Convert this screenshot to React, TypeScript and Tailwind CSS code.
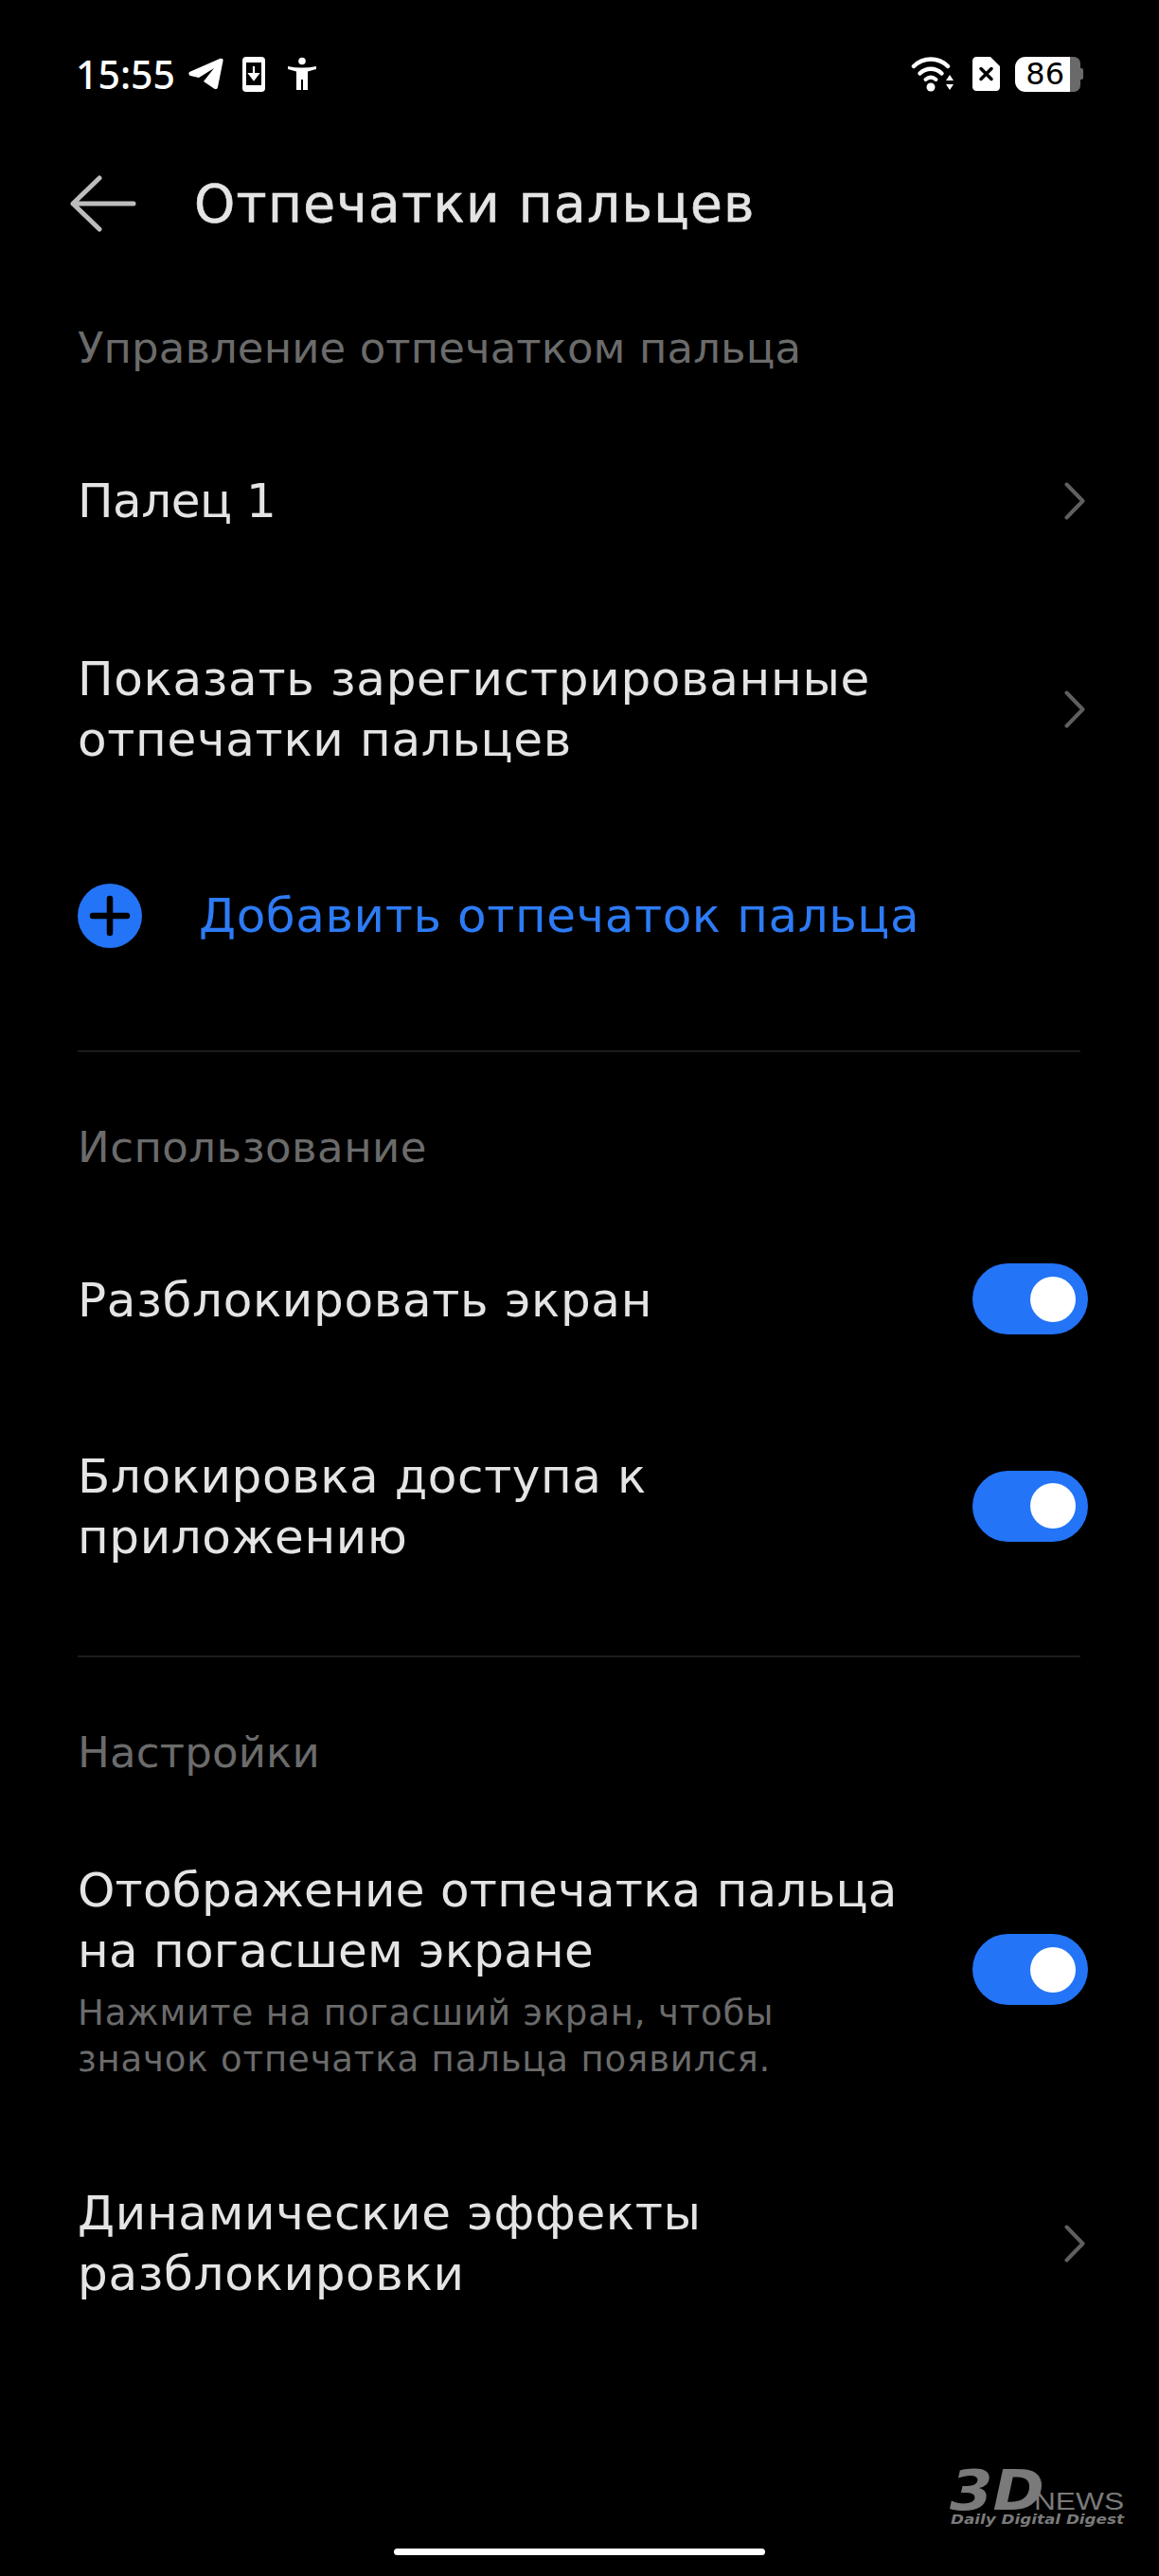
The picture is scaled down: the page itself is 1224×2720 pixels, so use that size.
function Chevron() {
  return (
    <svg width="22" height="40" viewBox="0 0 22 40" fill="none" className="mr-[3px] shrink-0">
      <path d="M2.500 2.500 L19.500 20 L2.500 37.500" stroke="#5f5f5f" strokeWidth="4" strokeLinecap="round" strokeLinejoin="round" />
    </svg>
  );
}

function Toggle() {
  return (
    <div className="flex h-[75px] w-[122px] shrink-0 items-center justify-end rounded-full bg-[#2374f6] pr-[13px]">
      <div className="h-[48px] w-[48px] rounded-full bg-white" />
    </div>
  );
}

function SectionLabel({ children, className }: { children: string; className: string }) {
  return <p className={`text-[45px] leading-[60px] text-[#6b6b6b] ${className}`}>{children}</p>;
}

function Row({ lines, right, className, textClass = "tracking-[0.7px]" }: { lines: string[]; right: React.ReactNode; className: string; textClass?: string }) {
  return (
    <div className={`flex items-center justify-between ${className}`}>
      <div className={`text-[50px] leading-[64px] text-[#e4e4e4] ${textClass}`}>
        {lines.map((line) => (
          <p key={line}>{line}</p>
        ))}
      </div>
      {right}
    </div>
  );
}

function StatusBar() {
  return (
    <div className="flex h-[58px] items-center justify-between pl-[80px] pr-[80px] text-white">
      <div className="flex items-center">
        <span className="font-['Noto_Sans',sans-serif] text-[41px] font-medium leading-none">15:55</span>
        <svg width="38" height="34" viewBox="0 0 38 34" className="ml-[13px]">
          <path d="M2 15 L34 1 C37 0 38 1.500 37.500 3.500 L32 31 C31.500 33.500 29 33.500 28 32.500 L17 25 L28 11 L12 21 L3 19 C1 18.500 1 16 2 15 Z" fill="white" />
        </svg>
        <svg width="24" height="37" viewBox="0 0 24 37" className="ml-[20px]">
          <rect width="24" height="37" rx="4" fill="white" />
          <rect x="4" y="6" width="16" height="24" fill="black" />
          <path d="M12 10 V19 M7.500 18 H16.500 L12 24 Z" stroke="white" strokeWidth="2.200" fill="white" />
        </svg>
        <svg width="32" height="36" viewBox="0 0 32 36" className="ml-[23px]">
          <circle cx="16" cy="4.500" r="3.800" fill="white" />
          <path d="M1 10 Q16 13 31 10 V13 L22 15.500 V35 H17 V24 H15 V35 H10 V15.500 L1 13 Z" fill="white" />
        </svg>
      </div>
      <div className="flex items-center">
        <svg width="46" height="38" viewBox="0 0 46 38" fill="none">
          <path d="M3 11 C13 1 29 1 39 11" stroke="white" strokeWidth="4.500" strokeLinecap="round" />
          <path d="M9.500 18.500 C16 12 26 12 32.500 18.500" stroke="white" strokeWidth="4.500" strokeLinecap="round" />
          <path d="M15.500 25 C19 22 23 22 26.500 25" stroke="white" strokeWidth="4" strokeLinecap="round" />
          <circle cx="21" cy="33" r="4.500" fill="white" />
          <path d="M41 20 L45 26 H37 Z M37 30 H45 L41 36 Z" fill="white" />
        </svg>
        <svg width="29" height="36" viewBox="0 0 29 36" className="ml-[19px]">
          <path d="M4 0 H19 L29 10 V32 C29 34 27.500 36 25 36 H4 C2 36 0 34 0 32 V4 C0 2 2 0 4 0 Z" fill="white" />
          <path d="M9 12.500 L20 23.500 M20 12.500 L9 23.500" stroke="black" strokeWidth="3.500" strokeLinecap="round" />
        </svg>
        <div className="ml-[16px] flex items-center">
          <div className="flex h-[37px] w-[58px] items-center justify-end rounded-l-[11px] bg-white pr-[6px] text-[32px] leading-none text-black">86</div>
          <div className="h-[37px] w-[11px] rounded-r-[7px] bg-[#6a6a6a]" />
          <div className="h-[12px] w-[3px] rounded-r-[2px] bg-[#6a6a6a]" />
        </div>
      </div>
    </div>
  );
}

function Watermark() {
  return (
    <svg width="190" height="70" viewBox="0 0 190 70" className="absolute left-[1001px] top-[2602px]" fill="#7a7a7a">
      <text x="2" y="48" fontFamily="DejaVu Sans" fontWeight="700" fontStyle="italic" fontSize="59" textLength="100" lengthAdjust="spacingAndGlyphs">3D</text>
      <text x="91" y="48" fontFamily="Liberation Sans" fontSize="25" textLength="95" lengthAdjust="spacingAndGlyphs">NEWS</text>
      <text x="3" y="63" fontFamily="DejaVu Sans" fontWeight="700" fontStyle="italic" fontSize="14" textLength="183" lengthAdjust="spacingAndGlyphs">Daily Digital Digest</text>
    </svg>
  );
}

export default function App() {
  return (
    <div className="flex h-[2720px] w-[1224px] flex-col bg-black font-['DejaVu_Sans',sans-serif]">
      <div className="h-[49px] shrink-0" />
      <StatusBar />

      <div className="mt-[78px] flex h-[60px] items-center pl-[74px]">
        <svg width="70" height="60" viewBox="0 0 70 60" fill="none">
          <path d="M67 30 H3 M31 3 L3 30 L31 57" stroke="#bdbdbd" strokeWidth="5" strokeLinecap="round" strokeLinejoin="round" />
        </svg>
        <h1 className="ml-[61px] text-[55px] font-medium leading-[60px] tracking-[1.3px] text-[#e4e4e4] [-webkit-text-stroke:0.6px_#e4e4e4]">Отпечатки пальцев</h1>
      </div>

      <div className="flex flex-1 flex-col pl-[82px] pr-[75px]">
        <SectionLabel className="mt-[93px] tracking-[0.1px]">Управление отпечатком пальца</SectionLabel>
        <Row className="mt-[99px] h-[64px]" textClass="tracking-[-0.5px]" lines={["Палец 1"]} right={<Chevron />} />
        <Row className="mt-[124px]" lines={["Показать зарегистрированные", "отпечатки пальцев"]} right={<Chevron />} />

        <div className="mt-[119px] flex h-[70px] items-center">
          <svg width="68" height="68" viewBox="0 0 68 68" className="shrink-0">
            <circle cx="34" cy="34" r="34" fill="#2374f6" />
            <path d="M34 16 V52 M16 34 H52" stroke="black" strokeWidth="6.500" strokeLinecap="round" />
          </svg>
          <span className="ml-[60px] text-[50px] leading-[64px] tracking-[0.6px] text-[#2d7bf5]">Добавить отпечаток пальца</span>
        </div>

        <div className="mt-[107px] mr-[8px] h-[2px] bg-[#1c1c1c]" />
        <SectionLabel className="mt-[71px] tracking-[0.5px]">Использование</SectionLabel>
        <Row className="mt-[92px]" textClass="pt-[2px] tracking-[0.7px]" lines={["Разблокировать экран"]} right={<Toggle />} />
        <Row className="mt-[116px]" textClass="pt-[2px] tracking-[0.6px]" lines={["Блокировка доступа к", "приложению"]} right={<Toggle />} />

        <div className="mt-[93px] mr-[8px] h-[2px] bg-[#1c1c1c]" />
        <SectionLabel className="mt-[71px] tracking-[0.2px]">Настройки</SectionLabel>

        <div className="mt-[83px] flex items-center justify-between">
          <div>
            <div className="text-[50px] leading-[64px] tracking-[0.25px] text-[#e4e4e4]">
              <p>Отображение отпечатка пальца</p>
              <p>на погасшем экране</p>
            </div>
            <div className="mt-[9px] text-[37px] leading-[49px] tracking-[0.85px] text-[#6b6b6b]">
              <p>Нажмите на погасший экран, чтобы</p>
              <p>значок отпечатка пальца появился.</p>
            </div>
          </div>
          <div className="mb-[4px]">
            <Toggle />
          </div>
        </div>

        <Row className="mt-[106px]" lines={["Динамические эффекты", "разблокировки"]} right={<Chevron />} />
      </div>

      <div className="mb-[22px] h-[7px] w-[392px] self-center rounded-full bg-white" />
      <Watermark />
    </div>
  );
}
